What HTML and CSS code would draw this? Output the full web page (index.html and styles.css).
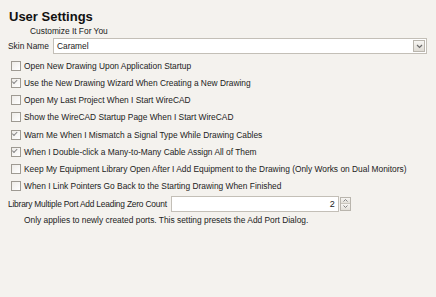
FILE: index.html
```html
<!DOCTYPE html>
<html lang="en">
<head>
    <meta charset="UTF-8">
    <title>User Settings</title>
    <link rel="stylesheet" href="styles.css">
</head>
<body>
    <div class="settings-page">
        <h1>User Settings</h1>
        <p class="subtitle">Customize It For You</p>

        <div class="skin-row">
            <label for="skin">Skin Name</label>
            <div class="combo" id="skin">
                <span class="combo-value">Caramel</span>
                <span class="combo-button">
                    <svg width="7" height="5" viewBox="0 0 7 5"><path d="M1 1 L3.5 3.5 L6 1" fill="none" stroke="#6b6b6b" stroke-width="1.2"/></svg>
                </span>
            </div>
        </div>

        <ul class="options">
            <li><span class="check"></span>Open New Drawing Upon Application Startup</li>
            <li><span class="check checked"></span>Use the New Drawing Wizard When Creating a New Drawing</li>
            <li><span class="check"></span>Open My Last Project When I Start WireCAD</li>
            <li><span class="check"></span>Show the WireCAD Startup Page When I Start WireCAD</li>
            <li><span class="check checked"></span>Warn Me When I Mismatch a Signal Type While Drawing Cables</li>
            <li><span class="check checked"></span>When I Double-click a Many-to-Many Cable Assign All of Them</li>
            <li><span class="check"></span>Keep My Equipment Library Open After I Add Equipment to the Drawing (Only Works on Dual Monitors)</li>
            <li><span class="check"></span>When I Link Pointers Go Back to the Starting Drawing When Finished</li>
        </ul>

        <div class="zero-row">
            <label>Library Multiple Port Add Leading Zero Count</label>
            <div class="spin">
                <span class="spin-value">2</span>
                <span class="spin-buttons">
                    <span class="spin-up"><svg width="5" height="3" viewBox="0 0 5 3"><path d="M0.5 2.5 L2.5 0.5 L4.5 2.5" fill="none" stroke="#777" stroke-width="0.9"/></svg></span>
                    <span class="spin-down"><svg width="5" height="3" viewBox="0 0 5 3"><path d="M0.5 0.5 L2.5 2.5 L4.5 0.5" fill="none" stroke="#777" stroke-width="0.9"/></svg></span>
                </span>
            </div>
        </div>
        <p class="hint">Only applies to newly created ports. This setting presets the Add Port Dialog.</p>
    </div>
</body>
</html>
```

FILE: styles.css
```css
/* Reset */
* {
    margin: 0;
    padding: 0;
    box-sizing: border-box;
}

body, html {
    height: 100%;
    background-color: #f4f2ee;
    color: #222;
    font-family: 'Liberation Sans', Arial, sans-serif;
    font-size: 8.4px;
}

.settings-page {
    padding: 9px 9px 0 8px;
}

h1 {
    font-size: 13px;
    font-weight: bold;
    color: #111;
    line-height: 16px;
    margin-left: 1px;
}

.subtitle {
    margin-left: 22px;
    line-height: 12px;
}

/* Skin Name combo */
.skin-row {
    display: flex;
    align-items: center;
    gap: 4px;
    margin-top: 1px;
    height: 16px;
}

.combo {
    flex: 1;
    display: flex;
    align-items: center;
    justify-content: space-between;
    height: 16px;
    background-color: #fff;
    border: 1px solid #c3bfb7;
    padding-left: 3px;
    padding-right: 1px;
}

.combo-button {
    display: flex;
    align-items: center;
    justify-content: center;
    width: 12px;
    height: 12px;
    border: 1px solid #b9b5ad;
    background: linear-gradient(#f7f6f3, #dedbd4);
}

/* Checkbox list */
.options {
    list-style: none;
    margin-top: 3px;
}

.options li {
    display: flex;
    align-items: center;
    gap: 3px;
    height: 17.25px;
    padding-left: 3px;
    white-space: nowrap;
}

.check {
    flex: none;
    width: 10px;
    height: 10px;
    border: 1px solid #9e9a92;
    background: linear-gradient(135deg, #eeece8, #ffffff);
    position: relative;
}

.check.checked::after {
    content: "";
    position: absolute;
    left: 2px;
    top: 1px;
    width: 4px;
    height: 2px;
    border-left: 1px solid #8a8a8a;
    border-bottom: 1px solid #8a8a8a;
    transform: translate(0, 1px) rotate(-45deg);
    transform-origin: left bottom;
}

/* Zero count spinner */
.zero-row {
    display: flex;
    align-items: center;
    gap: 4px;
    height: 17px;
    white-space: nowrap;
}

.zero-row label {
    letter-spacing: -0.2px;
}

.spin {
    display: flex;
    align-items: center;
    width: 180px;
    height: 16px;
}

.spin-value {
    flex: 1;
    height: 16px;
    line-height: 14px;
    text-align: right;
    padding-right: 3px;
    background-color: #fff;
    border: 1px solid #c3bfb7;
    font-size: 9px;
}

.spin-buttons {
    display: flex;
    flex-direction: column;
    width: 11px;
    height: 14px;
    margin-left: 1px;
    border: 1px solid #b9b5ad;
}

.spin-up, .spin-down {
    flex: 1;
    display: flex;
    align-items: center;
    justify-content: center;
    background: linear-gradient(#f7f6f3, #e2dfd8);
}

.spin-up {
    border-bottom: 1px solid #c9c5bd;
}

.hint {
    margin-left: 16px;
    line-height: 16px;
}
```
